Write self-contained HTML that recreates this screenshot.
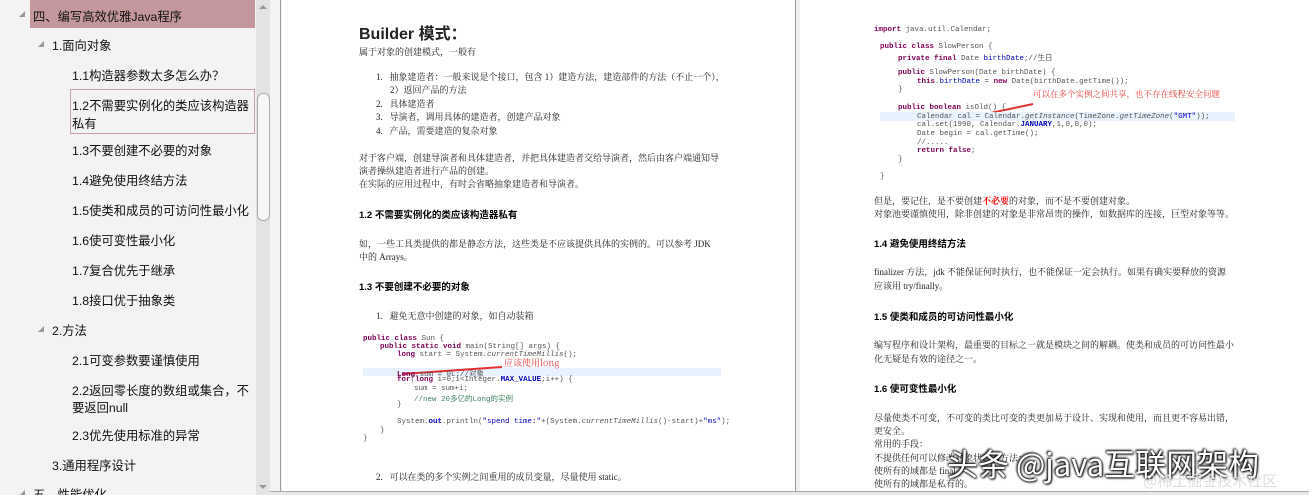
<!DOCTYPE html>
<html><head><meta charset="utf-8"><style>
*{margin:0;padding:0;box-sizing:border-box}
html,body{width:1309px;height:495px;overflow:hidden}
body{background:#f0f0f0;position:relative;font-family:"Liberation Sans","Microsoft YaHei","Noto Sans CJK SC",sans-serif}
.a{position:absolute;white-space:nowrap}
#left{position:absolute;left:0;top:0;width:256px;height:495px;background:#f3f3f3;overflow:hidden}
#left .a{font-size:12.3px;color:#111}
.tri{position:absolute;width:0;height:0;border-left:6px solid transparent;border-bottom:6px solid #999}
#sb{position:absolute;left:256px;top:0;width:14px;height:495px;background:#e3e3e3}
#thumb{position:absolute;left:257px;top:93px;width:13px;height:128px;background:#f7f7f7;border:1px solid #aaa;border-radius:6px}
#gap{position:absolute;left:270px;top:0;width:11px;height:495px;background:#f3f3f3;border-right:1px solid #999}
.pg{position:absolute;top:0;height:491px;background:#fff}
.t{font-family:"Liberation Serif","Noto Serif CJK SC",serif;font-size:9px;color:#222}
.h{font-size:9.5px;font-weight:bold;color:#000}
.code{font-family:"Liberation Mono",monospace;font-size:7.5px;color:#555}
.k{color:#7f0055;font-weight:bold}
.f{color:#0000c0}
.ar{position:absolute;width:0;height:0;border-left:4px solid transparent;border-right:4px solid transparent}
</style></head><body>
<div id="left">
<div style="position:absolute;left:30px;top:0;width:225px;height:28px;background:#c4979c"></div>
<div style="position:absolute;left:70px;top:89px;width:185px;height:45px;border:1px solid #c9a0a4"></div>
<div class="tri" style="left:19px;top:11px"></div><span class="a" style="left:33px;top:7px">四、编写高效优雅Java程序</span>
<div class="tri" style="left:38px;top:41px"></div><span class="a" style="left:52px;top:36px">1.面向对象</span>
<span class="a" style="left:72px;top:66px">1.1构造器参数太多怎么办？</span>
<span class="a" style="left:72px;top:96px">1.2不需要实例化的类应该构造器</span>
<span class="a" style="left:72px;top:114px">私有</span>
<span class="a" style="left:72px;top:141px">1.3不要创建不必要的对象</span>
<span class="a" style="left:72px;top:171px">1.4避免使用终结方法</span>
<span class="a" style="left:72px;top:201px">1.5使类和成员的可访问性最小化</span>
<span class="a" style="left:72px;top:231px">1.6使可变性最小化</span>
<span class="a" style="left:72px;top:261px">1.7复合优先于继承</span>
<span class="a" style="left:72px;top:291px">1.8接口优于抽象类</span>
<div class="tri" style="left:38px;top:326px"></div><span class="a" style="left:52px;top:321px">2.方法</span>
<span class="a" style="left:72px;top:351px">2.1可变参数要谨慎使用</span>
<span class="a" style="left:72px;top:381px">2.2返回零长度的数组或集合，不</span>
<span class="a" style="left:72px;top:398px">要返回null</span>
<span class="a" style="left:72px;top:426px">2.3优先使用标准的异常</span>
<span class="a" style="left:52px;top:456px">3.通用程序设计</span>
<div class="tri" style="left:19px;top:490px"></div><span class="a" style="left:33px;top:485px">五、性能优化</span>
</div>
<div id="sb"><div class="ar" style="left:3px;top:5px;border-bottom:4px solid #999"></div><div class="ar" style="left:3px;top:485px;border-top:4px solid #999"></div></div>
<div id="thumb"></div>
<div id="gap"></div>

<div class="pg" style="left:282px;width:514px;border-right:1px solid #999">
<span class="a" style="left:77px;top:20px;font-size:16px;font-weight:bold;color:#222">Builder 模式：</span>
<span class="a t" style="left:77px;top:45px">属于对象的创建模式，一般有</span>
<span class="a t" style="left:94px;top:70px">1.&nbsp;&nbsp; 抽象建造者：一般来说是个接口，包含 1）建造方法，建造部件的方法（不止一个），</span>
<span class="a t" style="left:108px;top:83px">2）返回产品的方法</span>
<span class="a t" style="left:94px;top:97px">2.&nbsp;&nbsp; 具体建造者</span>
<span class="a t" style="left:94px;top:110px">3.&nbsp;&nbsp; 导演者，调用具体的建造者，创建产品对象</span>
<span class="a t" style="left:94px;top:124px">4.&nbsp;&nbsp; 产品，需要建造的复杂对象</span>
<span class="a t" style="left:77px;top:151px">对于客户端，创建导演者和具体建造者，并把具体建造者交给导演者，然后由客户端通知导</span>
<span class="a t" style="left:77px;top:164px">演者操纵建造者进行产品的创建。</span>
<span class="a t" style="left:77px;top:177px">在实际的应用过程中，有时会省略抽象建造者和导演者。</span>
<span class="a h" style="left:77px;top:207px">1.2 不需要实例化的类应该构造器私有</span>
<span class="a t" style="left:77px;top:237px">如，一些工具类提供的都是静态方法，这些类是不应该提供具体的实例的。可以参考 JDK</span>
<span class="a t" style="left:77px;top:250px">中的 Arrays。</span>
<span class="a h" style="left:77px;top:279px">1.3 不要创建不必要的对象</span>
<span class="a t" style="left:94px;top:309px">1.&nbsp;&nbsp; 避免无意中创建的对象，如自动装箱</span>
<div style="position:absolute;left:81px;top:368px;width:358px;height:8px;background:#e8f2fe"></div>
<span class="a code" style="left:81px;top:335px"><b class="k">public class</b> Sun {</span>
<span class="a code" style="left:98px;top:343px"><b class="k">public static void</b> main(String[] args) {</span>
<span class="a code" style="left:115px;top:351px"><b class="k">long</b> start = System.<i>currentTimeMillis</i>();</span>
<span class="a" style="left:222px;top:356px;font-size:9px;color:#e04040;font-family:'Noto Serif CJK SC',serif">应该使用long</span>
<div style="position:absolute;left:120px;top:366px;width:100px;height:1.5px;background:#e03030;transform:rotate(-4deg);transform-origin:right"></div>
<span class="a code" style="left:115px;top:368px"><b class="k">Long</b> sum = 0L;//对象</span>
<span class="a code" style="left:115px;top:376px"><b class="k">for</b>(<b class="k">long</b> i=0;i&lt;Integer.<b class="f">MAX_VALUE</b>;i++) {</span>
<span class="a code" style="left:132px;top:385px">sum = sum+i;</span>
<span class="a code" style="left:132px;top:393px;color:#3f7f5f">//new 20多亿的Long的实例</span>
<span class="a code" style="left:115px;top:401px">}</span>
<span class="a code" style="left:115px;top:418px">System.<b class="f">out</b>.println(<span class="f">"spend time:"</span>+(System.<i>currentTimeMillis</i>()-start)+<span class="f">"ms"</span>);</span>
<span class="a code" style="left:98px;top:427px">}</span>
<span class="a code" style="left:81px;top:435px">}</span>
<span class="a t" style="left:94px;top:470px">2.&nbsp;&nbsp; 可以在类的多个实例之间重用的成员变量，尽量使用 static。</span>
</div>

<div class="pg" style="left:800px;width:509px">
<span class="a code" style="left:74px;top:26px"><b class="k">import</b> java.util.Calendar;</span>
<span class="a code" style="left:80px;top:43px"><b class="k">public class</b> SlowPerson {</span>
<span class="a code" style="left:98px;top:52px"><b class="k">private final</b> Date <span class="f">birthDate</span>;//生日</span>
<span class="a code" style="left:98px;top:69px"><b class="k">public</b> SlowPerson(Date birthDate) {</span>
<span class="a code" style="left:117px;top:78px"><b class="k">this</b>.<span class="f">birthDate</span> = <b class="k">new</b> Date(birthDate.getTime());</span>
<span class="a code" style="left:98px;top:86px">}</span>
<span class="a" style="left:233px;top:88px;font-size:8.5px;color:#e04040;font-family:'Noto Serif CJK SC',serif">可以在多个实例之间共享，也不存在线程安全问题</span>
<div style="position:absolute;left:165px;top:103px;width:68px;height:1.5px;background:#e03030;transform:rotate(-12deg);transform-origin:right"></div>
<span class="a code" style="left:98px;top:104px"><b class="k">public boolean</b> isOld() {</span>
<div style="position:absolute;left:80px;top:112px;width:355px;height:9px;background:#e8f2fe"></div>
<span class="a code" style="left:117px;top:113px">Calendar cal = Calendar.<i>getInstance</i>(TimeZone.<i>getTimeZone</i>(<span class="f">"GMT"</span>));</span>
<span class="a code" style="left:117px;top:121px">cal.set(1990, Calendar.<b class="f">JANUARY</b>,1,0,0,0);</span>
<span class="a code" style="left:117px;top:130px">Date begin = cal.getTime();</span>
<span class="a code" style="left:117px;top:139px">//.....</span>
<span class="a code" style="left:117px;top:147px"><b class="k">return false</b>;</span>
<span class="a code" style="left:98px;top:156px">}</span>
<span class="a code" style="left:80px;top:173px">}</span>
<span class="a t" style="left:74px;top:194px">但是，要记住，是不要创建<b style="color:#f00">不必要</b>的对象，而不是不要创建对象。</span>
<span class="a t" style="left:74px;top:207px">对象池要谨慎使用，除非创建的对象是非常昂贵的操作，如数据库的连接，巨型对象等等。</span>
<span class="a h" style="left:74px;top:236px">1.4 避免使用终结方法</span>
<span class="a t" style="left:74px;top:265px">finalizer 方法，jdk 不能保证何时执行，也不能保证一定会执行。如果有确实要释放的资源</span>
<span class="a t" style="left:74px;top:279px">应该用 try/finally。</span>
<span class="a h" style="left:74px;top:309px">1.5 使类和成员的可访问性最小化</span>
<span class="a t" style="left:74px;top:338px">编写程序和设计架构，最重要的目标之一就是模块之间的解耦。使类和成员的可访问性最小</span>
<span class="a t" style="left:74px;top:352px">化无疑是有效的途径之一。</span>
<span class="a h" style="left:74px;top:381px">1.6 使可变性最小化</span>
<span class="a t" style="left:74px;top:411px">尽量使类不可变，不可变的类比可变的类更加易于设计、实现和使用，而且更不容易出错，</span>
<span class="a t" style="left:74px;top:424px">更安全。</span>
<span class="a t" style="left:74px;top:437px">常用的手段：</span>
<span class="a t" style="left:74px;top:451px">不提供任何可以修改对象状态的方法；</span>
<span class="a t" style="left:74px;top:464px">使所有的域都是 final。</span>
<span class="a t" style="left:74px;top:477px">使所有的域都是私有的。</span>
<span class="a" style="left:147px;top:440px;font-size:31px;color:#fff;font-family:'Noto Sans CJK SC',sans-serif;text-shadow:0 0 2px #000,1px 1px 2px #000,-1px -1px 2px #000">头条 @java互联网架构</span>
<span class="a" style="left:343px;top:470px;font-size:15px;color:#ddd;font-family:'Noto Sans CJK SC',sans-serif">@稀土掘金技术社区</span>
</div>
<div style="position:absolute;left:270px;top:491px;width:1039px;height:4px;background:#e8e8e8;border-top:1px solid #aaa"></div>
</body></html>
